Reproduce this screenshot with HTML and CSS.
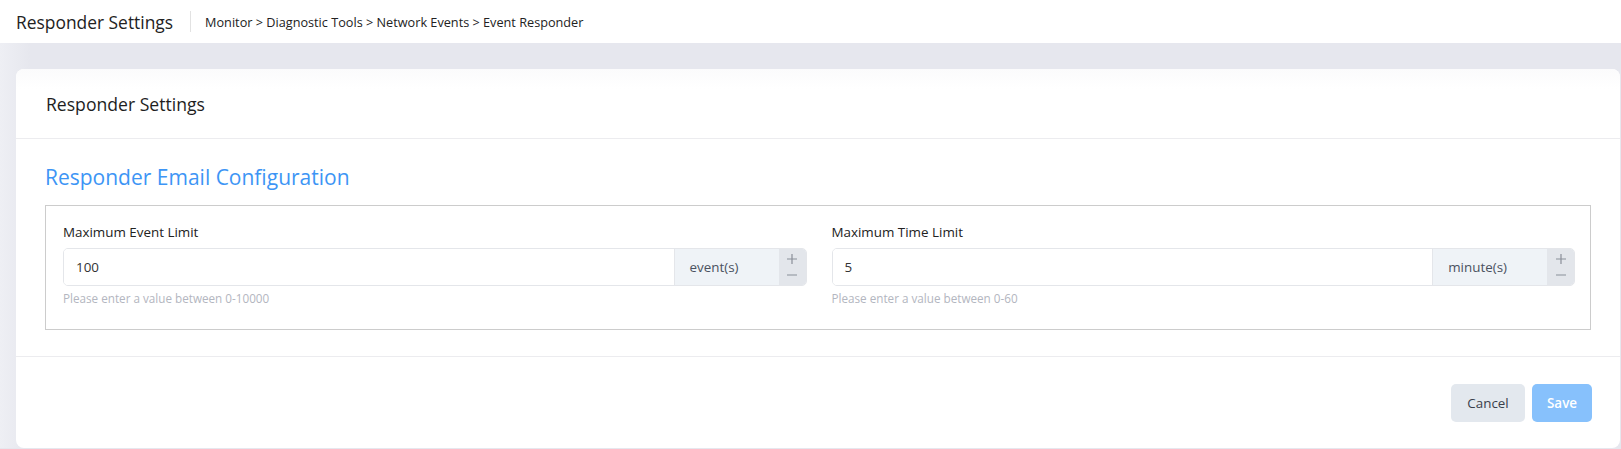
FILE: index.html
```html
<!DOCTYPE html>
<html lang="en">
<head>
<meta charset="utf-8">
<title>Responder Settings</title>
<link rel="stylesheet" href="styles.css">
</head>
<body>
<header class="topbar">
  <h1 class="topbar-title">Responder Settings</h1>
  <span class="topbar-sep"></span>
  <nav class="crumbs">Monitor &gt; Diagnostic Tools &gt; Network Events &gt; Event Responder</nav>
</header>
<main class="page">
  <section class="card">
    <div class="card-head">Responder Settings</div>
    <div class="card-body">
      <h2 class="section-title">Responder Email Configuration</h2>
      <div class="fieldbox">
        <div class="field">
          <label class="field-label">Maximum Event Limit</label>
          <div class="input-group">
            <div class="input-value">100</div>
            <div class="addon">event(s)</div>
            <div class="stepper">
              <svg class="step" width="12" height="12" viewBox="0 0 12 12"><path d="M6 1V11M1 6H11" stroke="#8a8f99" stroke-width="1.2" fill="none"/></svg>
              <svg class="step" width="12" height="12" viewBox="0 0 12 12"><path d="M1 6H11" stroke="#8a8f99" stroke-width="1.2" fill="none"/></svg>
            </div>
          </div>
          <div class="hint">Please enter a value between 0-10000</div>
        </div>
        <div class="field">
          <label class="field-label">Maximum Time Limit</label>
          <div class="input-group">
            <div class="input-value">5</div>
            <div class="addon">minute(s)</div>
            <div class="stepper">
              <svg class="step" width="12" height="12" viewBox="0 0 12 12"><path d="M6 1V11M1 6H11" stroke="#8a8f99" stroke-width="1.2" fill="none"/></svg>
              <svg class="step" width="12" height="12" viewBox="0 0 12 12"><path d="M1 6H11" stroke="#8a8f99" stroke-width="1.2" fill="none"/></svg>
            </div>
          </div>
          <div class="hint">Please enter a value between 0-60</div>
        </div>
      </div>
    </div>
    <div class="card-foot">
      <button class="btn btn-cancel">Cancel</button>
      <button class="btn btn-save">Save</button>
    </div>
  </section>
</main>
</body>
</html>
```
FILE: styles.css
```css
* { box-sizing: border-box; }
html, body { margin: 0; padding: 0; }
body {
  background: #e6e7ee;
  font-family: "Open Sans", "DejaVu Sans", sans-serif;
  color: #222;
  height: 449px;
  overflow: hidden;
}
.topbar {
  height: 43px;
  background: #fff;
  display: flex;
  align-items: center;
  padding-left: 16px;
}
.topbar-title {
  margin: 0;
  font-size: 17.4px;
  font-weight: 400;
  color: #222;
}
.topbar-sep {
  width: 1px;
  height: 21px;
  background: #e2e2e2;
  margin: 0 14px 0 17px;
}
.crumbs {
  font-size: 12.7px;
  color: #222;
}
.page {
  padding: 26px 1px 0 16px;
  background: linear-gradient(90deg, #eeeff4 0, #e6e7ee 30px);
}
.card {
  background: #fff;
  border-radius: 8px;
  height: 379px;
  display: flex;
  flex-direction: column;
}
.card-head {
  height: 70px;
  padding-left: 30px;
  display: flex;
  align-items: center;
  font-size: 17.6px;
  color: #1e1e1e;
  border-bottom: 1px solid #ececef;
  border-radius: 8px 8px 0 0;
  background: linear-gradient(#fbfbfc, #fff 20px);
}
.card-body {
  padding: 24px 29px 26px 29px;
  border-bottom: 1px solid #ececef;
}
.section-title {
  margin: 0 0 14px 0;
  font-size: 21px;
  line-height: 28px;
  font-weight: 400;
  color: #3d95f5;
}
.fieldbox {
  border: 1px solid #cccccc;
  padding: 17px 15px 22px 17px;
  display: grid;
  grid-template-columns: 1fr 1fr;
  column-gap: 25px;
}
.field-label {
  display: block;
  font-size: 13.4px;
  line-height: 18px;
  color: #222;
  margin-bottom: 7px;
}
.input-group {
  display: flex;
  height: 38px;
  border: 1px solid #e4e6ea;
  border-radius: 5px;
  overflow: hidden;
}
.input-value {
  flex: 1;
  background: #fff;
  padding-left: 12px;
  display: flex;
  align-items: center;
  font-size: 13.4px;
  color: #333;
}
.addon {
  background: #eff3f7;
  border-left: 1px solid #e4e6ea;
  padding: 0 40px 0 15px;
  display: flex;
  align-items: center;
  font-size: 13.4px;
  color: #4a5160;
}
.stepper {
  width: 27px;
  background: #e3e6eb;
  display: flex;
  flex-direction: column;
  align-items: center;
  justify-content: space-around;
  padding: 2px 0;
}
.step { display: block; }
.hint {
  margin-top: 3px;
  font-size: 11.7px;
  line-height: 18px;
  color: #b3b6c0;
}
.card-foot {
  flex: 1;
  display: flex;
  justify-content: flex-end;
  align-items: flex-start;
  padding: 27px 28px 0 0;
  gap: 7px;
}
.btn {
  height: 38px;
  border: none;
  border-radius: 5px;
  font-family: inherit;
  font-size: 13.4px;
  padding: 0;
}
.btn-cancel {
  width: 74px;
  background: #e3e8ee;
  color: #3a3f4b;
}
.btn-save {
  width: 60px;
  background: #87c1fc;
  color: #fff;
  font-weight: 600;
}
```
